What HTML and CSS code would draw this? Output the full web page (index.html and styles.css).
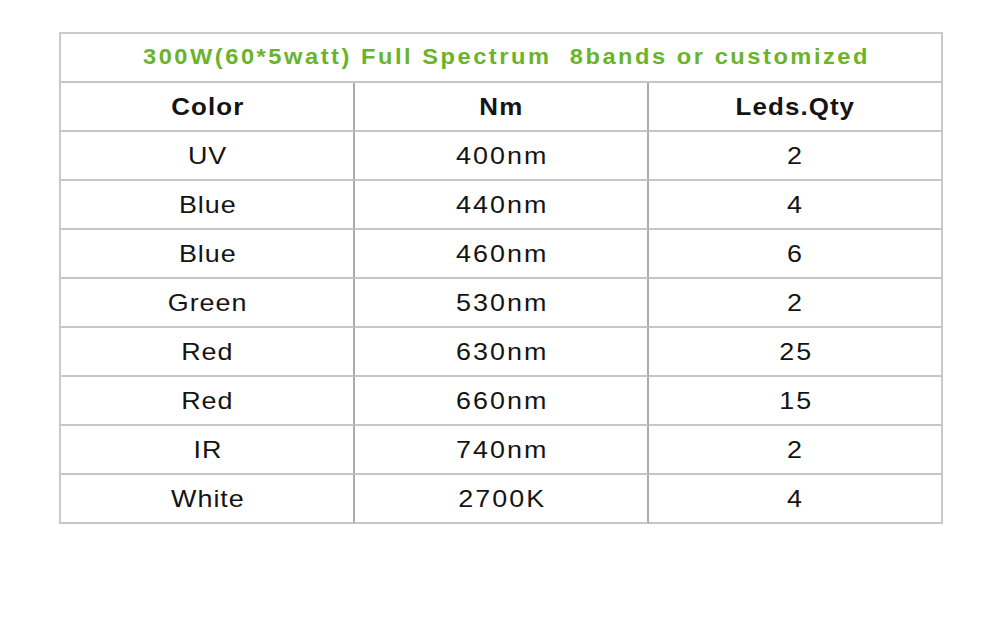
FILE: index.html
```html
<!DOCTYPE html>
<html>
<head>
<meta charset="utf-8">
<link rel="stylesheet" href="styles.css">
</head>
<body>
<div class="spec">
  <div class="cell title"><span>300W(60*5watt) Full Spectrum&nbsp; 8bands or customized</span></div>
  <div class="cell head"><span>Color</span></div>
  <div class="cell head"><span>Nm</span></div>
  <div class="cell head"><span>Leds.Qty</span></div>

  <div class="cell"><span>UV</span></div><div class="cell num"><span>400nm</span></div><div class="cell num"><span>2</span></div>
  <div class="cell"><span>Blue</span></div><div class="cell num"><span>440nm</span></div><div class="cell num"><span>4</span></div>
  <div class="cell"><span>Blue</span></div><div class="cell num"><span>460nm</span></div><div class="cell num"><span>6</span></div>
  <div class="cell"><span>Green</span></div><div class="cell num"><span>530nm</span></div><div class="cell num"><span>2</span></div>
  <div class="cell"><span>Red</span></div><div class="cell num"><span>630nm</span></div><div class="cell num"><span>25</span></div>
  <div class="cell"><span>Red</span></div><div class="cell num"><span>660nm</span></div><div class="cell num"><span>15</span></div>
  <div class="cell"><span>IR</span></div><div class="cell num"><span>740nm</span></div><div class="cell num"><span>2</span></div>
  <div class="cell"><span>White</span></div><div class="cell num"><span>2700K</span></div><div class="cell num"><span>4</span></div>
</div>
</body>
</html>
```
FILE: styles.css
```css
html, body {
  margin: 0;
  padding: 0;
  background: #ffffff;
}
body {
  padding: 32px 0 0 59px;
  font-family: "Liberation Sans", Arial, sans-serif;
}
.spec {
  display: grid;
  grid-template-columns: repeat(3, 294px);
  grid-auto-rows: 49px;
  width: 882px;
  border-top: 2px solid #cacaca;
  border-left: 2px solid #cacaca;
}
.cell {
  display: flex;
  align-items: center;
  justify-content: center;
  border-right: 2px solid #cacaca;
  border-bottom: 2px solid #c6c6c6;
  font-size: 24px;
  letter-spacing: 0.9px;
  padding-left: 1px;
  color: #141414;
}
.cell > span {
  display: inline-block;
  transform: scaleX(1.12);
}
.cell.num {
  letter-spacing: 1.8px;
  padding-left: 2px;
}
.spec > .cell:nth-child(3n+2):not(.title),
.spec > .cell:nth-child(3n+3) {
  border-right-color: #ababab;
}
.spec > .cell:nth-child(3n+1) {
  border-right-color: #cacaca;
}
.title {
  grid-column: 1 / span 3;
  font-weight: bold;
  font-size: 21.5px;
  letter-spacing: 2.3px;
  padding-left: 10px;
  color: #6ab42b;
}
.title > span {
  transform: scaleX(1.1);
}
.head {
  font-weight: bold;
  font-size: 24px;
  letter-spacing: 1px;
}
.head > span {
  transform: scaleX(1.08);
}
```
